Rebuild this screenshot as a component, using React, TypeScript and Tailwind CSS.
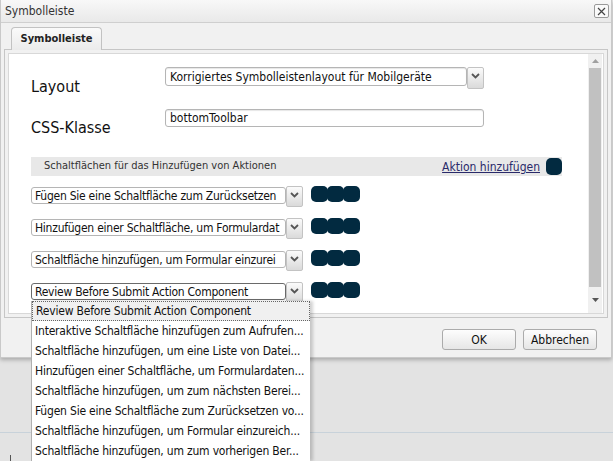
import React from "react";

const rows = [
  "Fügen Sie eine Schaltfläche zum Zurücksetzen",
  "Hinzufügen einer Schaltfläche, um Formulardat",
  "Schaltfläche hinzufügen, um Formular einzurei",
  "Review Before Submit Action Component",
];

const options = [
  "Review Before Submit Action Component",
  "Interaktive Schaltfläche hinzufügen zum Aufrufen...",
  "Schaltfläche hinzufügen, um eine Liste von Datei...",
  "Hinzufügen einer Schaltfläche, um Formulardaten...",
  "Schaltfläche hinzufügen, um zum nächsten Berei...",
  "Fügen Sie eine Schaltfläche zum Zurücksetzen vo...",
  "Schaltfläche hinzufügen, um Formular einzureich...",
  "Schaltfläche hinzufügen, um zum vorherigen Ber...",
];

function DropButton({ tall }: { tall?: boolean }) {
  return (
    <div
      className={`w-[17px] ${tall ? "h-[22px]" : "h-[21px]"} shrink-0 border border-[#c3c3c3] rounded-[2px] bg-gradient-to-b from-[#fbfbfb] to-[#dadada] flex justify-center pt-[5px]`}
    >
      <svg width="9" height="6" viewBox="0 0 9 6">
        <path d="M1 1l3.5 3.5L8 1" stroke="#555" strokeWidth="1.8" fill="none" />
      </svg>
    </div>
  );
}

function Blobs() {
  return (
    <svg width="49" height="16" viewBox="0 0 49 16" className="shrink-0">
      <rect x="0" y="0" width="17" height="16" rx="5" fill="#022a40" />
      <rect x="16" y="0" width="17" height="16" rx="5" fill="#022a40" />
      <rect x="32" y="0" width="17" height="16" rx="5" fill="#022a40" />
    </svg>
  );
}

export default function App() {
  return (
    <div className="w-[613px] h-[461px] bg-[#e3e3e3] relative overflow-hidden font-['Tahoma','DejaVu_Sans_Condensed','DejaVu_Sans',sans-serif] text-[12px] text-[#111]">
      {/* dialog */}
      <div className="w-[612px] h-[358px] bg-[#f1f1f1] border-x border-b border-[#c9c9c9] shadow-[0_2px_4px_rgba(0,0,0,0.25)] flex flex-col">
        <div className="h-[23px] shrink-0 bg-gradient-to-b from-[#f8f8f8] to-[#e9e9e9] border-b border-[#cfcfcf] flex items-center justify-between pl-[4px] pr-[2px]">
          <span className="text-[12px] text-[#333]">Symbolleiste</span>
          <div className="w-[15px] h-[14px] border border-[#9a9a9a] rounded-[2px] bg-[#fafafa] flex items-center justify-center">
            <svg width="9" height="9" viewBox="0 0 9 9">
              <path d="M1 1l7 7M8 1l-7 7" stroke="#444" strokeWidth="1.2" />
            </svg>
          </div>
        </div>

        <div className="px-[3px] pt-[4px]">
          <div className="pl-[7px] flex">
            <div className="w-[91px] h-[23px] border-x border-t border-[#c2c2c2] rounded-t-[4px] bg-gradient-to-b from-[#fafafa] to-[#ebebeb] flex items-center justify-center text-[11px] font-bold text-[#222]">
              Symbolleiste
            </div>
          </div>
          <div className="-mt-px border border-[#c6c6c6] p-[3px] bg-[#f1f1f1]">
            <div className="h-[261px] border border-[#d8d8d8] bg-white flex">
              <div className="flex-1 pl-[22px] pt-[13px] flex flex-col">
                <div className="flex items-start">
                  <div className="w-[134px] mt-[10px] text-[16px] leading-[20px] text-[#111]">Layout</div>
                  <div className="w-[302px] h-[19px] border border-[#b5b5b5] rounded-[3px] shadow-[inset_0_1px_1px_rgba(0,0,0,0.1)] pl-[4px] flex items-center whitespace-nowrap overflow-hidden">
                    Korrigiertes Symbolleistenlayout für Mobilgeräte
                  </div>
                  <DropButton tall />
                </div>
                <div className="flex items-start mt-[12px]">
                  <div className="w-[134px] mt-[9px] text-[16px] leading-[20px] text-[#111]">CSS-Klasse</div>
                  <div className="w-[319px] h-[18px] border border-[#b5b5b5] rounded-[3px] shadow-[inset_0_1px_1px_rgba(0,0,0,0.1)] pl-[4px] flex items-center">
                    bottomToolbar
                  </div>
                </div>

                <div className="mt-[19px] w-[531px] h-[19px] bg-[#e8e8e8] flex items-center justify-between pl-[13px]">
                  <span className="text-[11px] text-[#333]">Schaltflächen für das Hinzufügen von Aktionen</span>
                  <div className="flex items-center gap-[6px]">
                    <span className="text-[12px] text-[#2a2a6a] underline">Aktion hinzufügen</span>
                    <div className="w-[16px] h-[17px] rounded-[5px] bg-[#022a40]" />
                  </div>
                </div>

                <div className="mt-[10px] flex flex-col gap-[11px]">
                  {rows.map((r, i) => (
                    <div key={i} className="flex items-start h-[21px]">
                      <div
                        className={`w-[255px] h-[17px] mt-px border ${i === 3 ? "border-[#6a6a6a]" : "border-[#b5b5b5]"} rounded-[3px] pl-[3px] flex items-center whitespace-nowrap overflow-hidden tracking-[-0.25px]`}
                      >
                        {r}
                      </div>
                      <DropButton />
                      <div className="ml-[8px]">
                        <Blobs />
                      </div>
                    </div>
                  ))}
                </div>
              </div>

              {/* scrollbar */}
              <div className="w-[14px] mr-px bg-[#f0f0f0] flex flex-col items-center">
                <div className="h-[14px] flex items-center justify-center">
                  <svg width="7" height="4" viewBox="0 0 7 4">
                    <path d="M0 4L3.5 0L7 4Z" fill="#a0a0a0" />
                  </svg>
                </div>
                <div className="w-[12px] h-[219px] bg-[#c1c1c1]" />
                <div className="flex-1 flex items-center justify-center">
                  <svg width="7" height="4" viewBox="0 0 7 4">
                    <path d="M0 0L3.5 4L7 0Z" fill="#555" />
                  </svg>
                </div>
              </div>
            </div>
          </div>
        </div>

        <div className="flex justify-end gap-[7px] pr-[14px] pt-[11px]">
          <div className="w-[74px] h-[21px] border border-[#ababab] rounded-[3px] bg-gradient-to-b from-[#fdfdfd] to-[#e6e6e6] flex items-center justify-center">
            OK
          </div>
          <div className="w-[74px] h-[21px] border border-[#ababab] rounded-[3px] bg-gradient-to-b from-[#fdfdfd] to-[#e6e6e6] flex items-center justify-center">
            Abbrechen
          </div>
        </div>
      </div>

      {/* page below */}
      <div className="mt-[74px] border-t border-[#c8d2da]" />
      <div className="ml-[10px] mt-[22px] w-px h-[6px] bg-[#555]" />

      {/* open dropdown list */}
      <div className="absolute left-[31px] top-[301px] w-[279px] bg-white border-l border-[#b0b0b0] shadow-[3px_0_3px_rgba(0,0,0,0.18)]">
        {options.map((o, i) => (
          <div
            key={i}
            className={`h-[20px] pl-[3px] flex items-center whitespace-nowrap overflow-hidden tracking-[-0.2px] ${i === 0 ? "bg-[#f0f0f0] border border-dotted border-[#666]" : ""}`}
          >
            {o}
          </div>
        ))}
      </div>
    </div>
  );
}
